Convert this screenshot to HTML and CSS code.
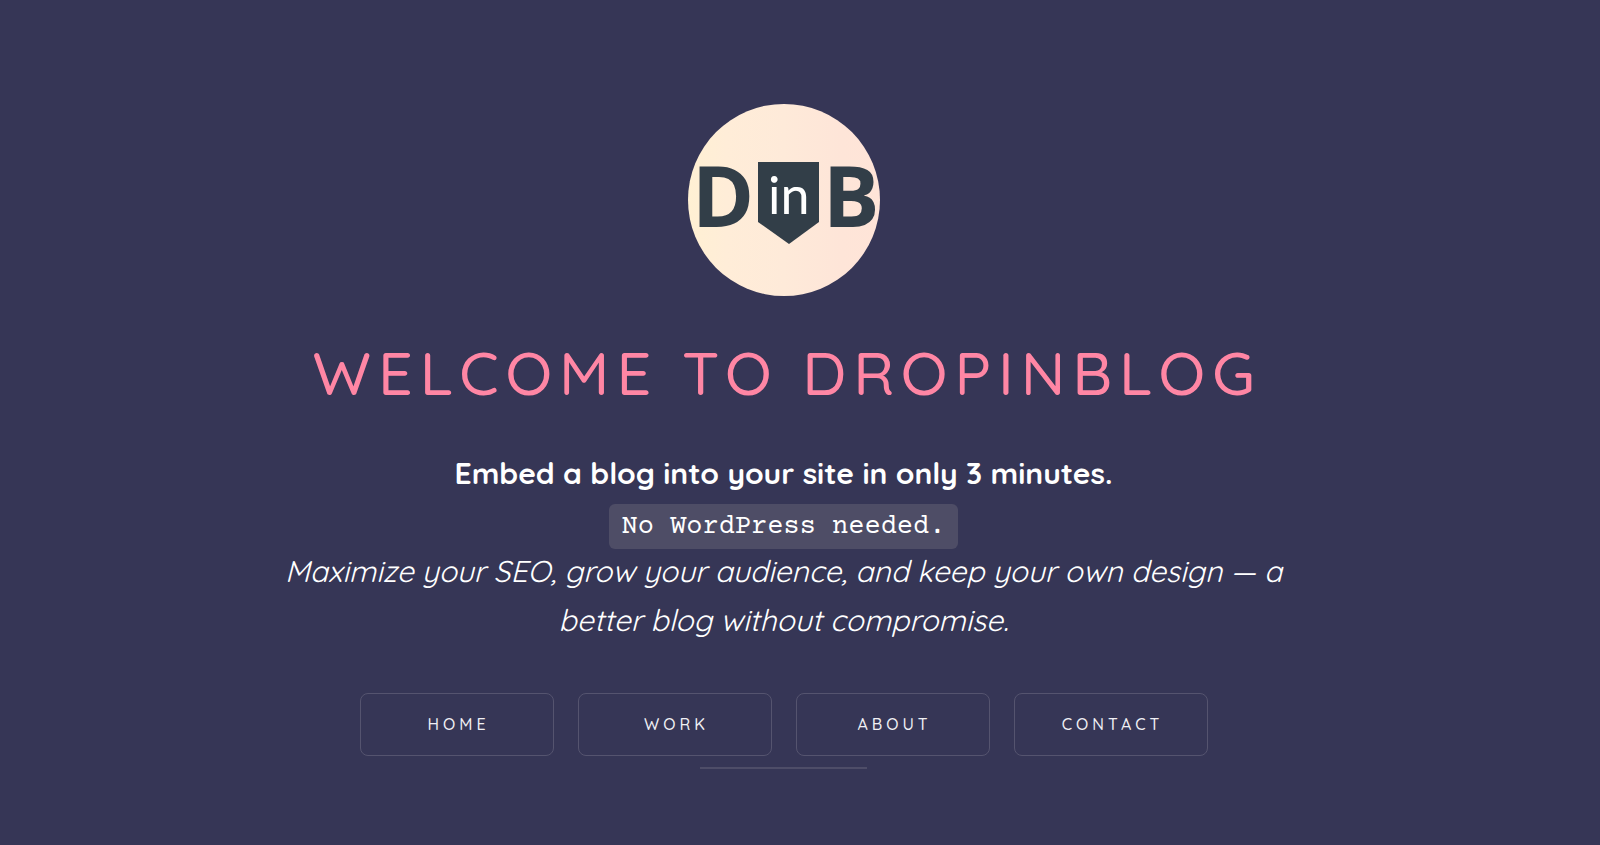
FILE: index.html
```html
<!DOCTYPE html>
<html lang="en">
<head>
    <meta charset="UTF-8">
    <meta name="viewport" content="width=device-width, initial-scale=1.0">
    <title>DropInBlog</title>
    <link rel="stylesheet" href="styles.css">
</head>
<body>
    <main class="container">
        <svg class="logo" viewBox="0 0 192 192" role="img" aria-label="DropInBlog logo">
            <defs>
                <linearGradient id="cream">
                    <stop offset="0" stop-color="#fff0d3"/>
                    <stop offset="0.2" stop-color="#ffedd8"/>
                    <stop offset="0.5" stop-color="#feead9"/>
                    <stop offset="0.8" stop-color="#fee5d8"/>
                    <stop offset="1" stop-color="#ffe4d8"/>
                </linearGradient>
            </defs>
            <circle cx="96" cy="96" r="96" fill="url(#cream)"/>
            <text class="logo-letter" x="4" y="123">D</text>
            <path d="M70 58h61v60l-30 22-31-22z" fill="#323e48"/>
            <text class="logo-in" x="80" y="110">in</text>
            <text class="logo-letter" x="135" y="123">B</text>
        </svg>
        <h1>Welcome to DropInBlog</h1>
        <p class="intro">
            <strong>Embed a blog into your site in only 3 minutes.</strong><br>
            <code>No WordPress needed.</code><br>
            <em>Maximize your SEO, grow your audience, and keep your own design — a better blog without compromise.</em>
        </p>
        <nav class="menu">
            <a href="#home">Home</a>
            <a href="#work">Work</a>
            <a href="#about">About</a>
            <a href="#contact">Contact</a>
        </nav>
        <hr class="divider">
    </main>
</body>
</html>
```
FILE: styles.css
```css
* {
    box-sizing: border-box;
}
body {
    font-family: Quicksand, Lato, sans-serif;
    text-align: center;
    background: #363656;
    color: #ffffff;
    margin: 0;
    padding: 104px 33px 76px 0;
}
.container {
    max-width: 1040px;
    margin: 0 auto;
    display: flex;
    flex-direction: column;
    align-items: center;
}
.logo {
    width: 192px;
    height: 192px;
}
.logo-letter {
    font: bold 84px "Open Sans", sans-serif;
    fill: #323e48;
}
.logo-in {
    font: 52px Lato, sans-serif;
    fill: #ffffff;
}
h1 {
    margin: 40px 0 0;
    font-size: 61px;
    font-weight: 500;
    line-height: 72px;
    letter-spacing: 7px;
    text-indent: 7px;
    text-transform: uppercase;
    white-space: nowrap;
    color: #ff86a4;
}
.intro {
    margin: 41px 0 0;
    font-size: 30px;
    line-height: 49px;
}
.intro code {
    padding: 8px 13px 7px;
    border-radius: 6px;
    background: #4e4d66;
    font-family: "Courier Prime", "Nimbus Mono PS", FreeMono, "Courier New", "Liberation Mono", monospace;
    font-size: 27px;
    line-height: 1;
}
.menu {
    display: flex;
    flex-wrap: wrap;
    justify-content: center;
    gap: 24px;
    margin-top: 48px;
}
.menu a {
    width: 194px;
    border: 1px solid #55546f;
    border-radius: 8px;
    font-size: 16px;
    font-weight: 500;
    line-height: 61px;
    letter-spacing: 4px;
    text-indent: 4px;
    text-transform: uppercase;
    text-decoration: none;
    color: #f0f0f4;
}
.divider {
    width: 167px;
    height: 2px;
    margin: 11px 0 0;
    border: none;
    background: #4e4d68;
}
```
